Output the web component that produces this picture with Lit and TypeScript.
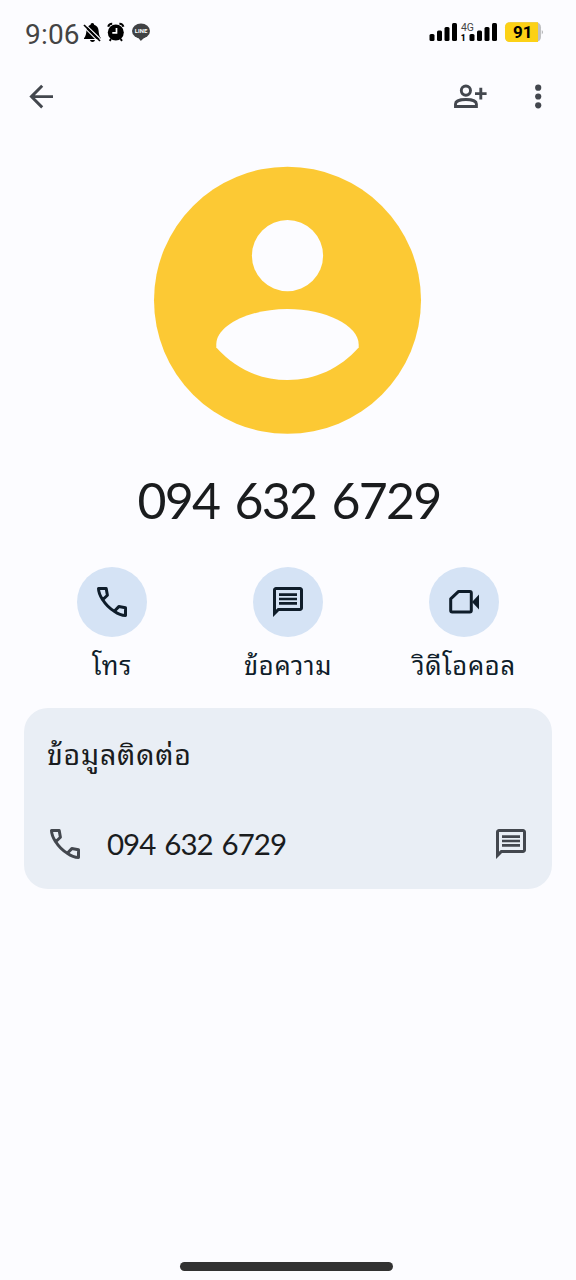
import { LitElement, html, svg, css } from "lit";
import { customElement, property } from "lit/decorators.js";

const phone = svg`<g transform="translate(3 3)" fill="none" stroke="currentColor" stroke-width="3" stroke-linejoin="round">
  <path d="M1.5 1.5H9.2L10.4 8.2L5.7 12.8C3.1 9 1.6 5.2 1.5 1.5ZM5.7 12.8C8.7 17.6 12.5 21.4 17.3 24.3M28.5 28.5V20.8L21.8 19.6L17.3 24.3C21 26.9 24.8 28.4 28.5 28.5Z"/></g>`;
const chat = svg`<path transform="scale(1.5)" fill="currentColor" d="M20 2H4c-1.1 0-2 .9-2 2v18l4-4h14c1.1 0 2-.9 2-2V4c0-1.1-.9-2-2-2zm0 14H5.17L4 17.17V4h16v12zM6 12h12v1.8H6zM6 9.1h12v1.8H6zM6 6.2h12V8H6z"/>`;
const video = svg`<path fill="none" stroke="currentColor" stroke-width="3" stroke-linejoin="round" d="M12.6 7.4H23.800Q25.3 7.4 25.3 8.900V26.500Q25.3 28 23.800 28H6.200Q4.7 28 4.700 26.500V14.900Z"/>
  <path fill="currentColor" d="M26 18L33 10.5V25.5Z"/>`;
const icons: Record<string, unknown> = { phone, chat, video };

@customElement("line-icon")
class LineIcon extends LitElement {
  @property() name = "phone";
  static styles = css`
    :host { display: block; width: 36px; height: 36px; }
    svg { display: block; }
  `;
  render() {
    return html`<svg width="36" height="36" viewBox="0 0 36 36">${icons[this.name]}</svg>`;
  }
}

@customElement("quick-action")
class QuickAction extends LitElement {
  @property() icon = "phone";
  @property() label = "";
  static styles = css`
    :host { display: flex; flex-direction: column; align-items: center; color: #0f1d2a; }
    .disc { width: 70px; height: 70px; border-radius: 50%; background: #d5e3f5; display: grid; place-items: center; }
    .label { margin-top: 10px; font-size: 25.5px; line-height: 36px; letter-spacing: .7px; font-weight: 400; white-space: nowrap; }
  `;
  render() {
    return html`<div class="disc"><line-icon name=${this.icon}></line-icon></div>
      <div class="label">${this.label}</div>`;
  }
}

@customElement("status-bar")
class StatusBar extends LitElement {
  static styles = css`
    :host { display: flex; height: 64px; box-sizing: border-box; padding: 16px 32px 0 25px; font-family: Roboto, sans-serif; }
    .time { width: 57px; height: 36px; line-height: 38px; font-size: 28px; color: #444; letter-spacing: .2px; }
    svg { display: block; }
    .right { margin-left: auto; }
  `;
  render() {
    return html`
      <div class="time">9:06</div>
      <svg width="72" height="32" viewBox="82 16 72 32">
        <path d="M92.3 23c1.2 0 1.8.8 1.8 1.8 3 .9 4.3 3 4.5 6 .2 3.5.8 5.5 2.4 7.500v.7H84v-.7c1.600-2 2.200-4 2.400-7.500.2-3 1.500-5.100 4.200-6 0-1 .6-1.800 1.700-1.800zM90 40h5c-.3 1.200-1.200 1.900-2.500 1.900S90.300 41.200 90 40z"/>
        <path d="M85 23.800L101 39.500" stroke="#fcfcff" stroke-width="1.100"/>
        <path d="M84 25L100 41" stroke="#000" stroke-width="1.700"/>
        <path d="M83 26.300L99 42.300" stroke="#fcfcff" stroke-width="1.100"/>
        <circle cx="115.800" cy="32.500" r="8"/>
        <path d="M108.200 26.800Q109 23.700 112.200 23.800M119.400 23.800Q122.700 23.700 123.400 26.800M111 39L109.700 40.800M120.600 39L122 40.800" fill="none" stroke="#000" stroke-width="2"/>
        <path d="M116.500 28V32.800H112.300" fill="none" stroke="#fff" stroke-width="1.700"/>
        <ellipse cx="141" cy="31" rx="9" ry="7.600" fill="#404244"/>
        <path d="M137 36H146L140.800 41Z" fill="#404244"/>
        <text x="134.800" y="33.300" font-size="6" font-weight="700" fill="#fff" textLength="12.400" lengthAdjust="spacingAndGlyphs">LINE</text>
      </svg>
      <svg class="right" width="116" height="32" viewBox="428 16 116 32">
        <rect x="429.500" y="34" width="5" height="7" rx="1.500"/>
        <rect x="437" y="30.500" width="5" height="10.500" rx="1.500"/>
        <rect x="444.500" y="27" width="5" height="14" rx="1.500"/>
        <rect x="452" y="23" width="5" height="18" rx="1.500"/>
        <text x="461" y="31" font-size="10.500" fill="#444" textLength="13" lengthAdjust="spacingAndGlyphs">4G</text>
        <text x="460.800" y="41" font-size="8.500" font-weight="900">1</text>
        <rect x="469.500" y="34" width="5" height="7" rx="1.500"/>
        <rect x="477" y="30.500" width="5" height="10.500" rx="1.500"/>
        <rect x="484.500" y="27" width="5" height="14" rx="1.500"/>
        <rect x="492" y="23" width="5" height="18" rx="1.500"/>
        <rect x="505" y="22.300" width="36" height="19.700" rx="5" fill="#bfc0c2"/>
        <path d="M510 22.300H538V42H510Q505 42 505 37V27.300Q505 22.300 510 22.300Z" fill="#fcd116"/>
        <path d="M541.800 30Q544 32 541.800 34.500Z" fill="#a8a9ab"/>
        <text x="513" y="38" font-size="16.500" font-weight="700" textLength="19.500" lengthAdjust="spacingAndGlyphs">91</text>
      </svg>`;
  }
}

@customElement("app-root")
class AppRoot extends LitElement {
  static styles = css`
    :host {
      display: flex; flex-direction: column; height: 1280px; box-sizing: border-box;
      background: #fcfcff; color: #1a1c1e;
      font-family: Lato, "Noto Sans Thai Looped", "Noto Looped Thai", Loma, Garuda, Waree, Norasi, "Noto Serif Thai", sans-serif;
    }
    svg { display: block; }
    .toolbar { height: 64px; padding: 1px 31px 0 28px; box-sizing: border-box; display: flex; align-items: center; justify-content: space-between; color: #43474e; }
    .tools { display: flex; align-items: center; gap: 42px; }
    .avatar { margin: 38px 0 0 153px; }
    .number { margin-top: 33px; height: 64px; line-height: 64px; font-size: 50px; text-align: center; letter-spacing: -1.8px; word-spacing: 4.4px; padding-left: 2px; white-space: nowrap; }
    .actions { margin-top: 35px; padding: 0 24px; display: grid; grid-template-columns: repeat(3, 176px); height: 141px; }
    .card { margin: 0 24px; height: 181px; box-sizing: border-box; border-radius: 24px; background: #e9eef5; padding: 28px 23px 0; }
    .title { font-size: 28.5px; line-height: 36px; letter-spacing: .8px; white-space: nowrap; }
    .row { margin-top: 54px; display: flex; align-items: center; height: 36px; color: #43474e; }
    .value { margin-left: 24px; flex: 1; font-size: 29.5px; line-height: 36px; color: #1a1c1e; letter-spacing: -1px; word-spacing: 2.4px; }
    .handle { margin: auto auto 9px 180px; width: 213px; height: 9px; border-radius: 5px; background: #323232; }
  `;
  render() {
    return html`
      <status-bar></status-bar>
      <div class="toolbar">
        <svg width="28" height="28" viewBox="28 83 28 28" fill="none" stroke="currentColor" stroke-width="2.900">
          <path d="M53 96.600H31.500M42.200 85.800L31.400 96.600L42.200 107.400"/>
        </svg>
        <div class="tools">
          <svg width="36" height="28" viewBox="453 83 36 28" fill="none" stroke="currentColor" stroke-width="2.900">
            <circle cx="465.900" cy="90.600" r="4.600"/>
            <path d="M455.500 106.500V104C455.500 101 460.500 99.500 465.900 99.500S476.400 101 476.400 104V106.500Z"/>
            <path d="M475 93.600H486.600M480.800 87.800V99.400"/>
          </svg>
          <svg width="14" height="28" viewBox="531 83 14 28" fill="currentColor">
            <circle cx="538.200" cy="87.700" r="3.100"/><circle cx="538.200" cy="96.500" r="3.100"/><circle cx="538.200" cy="105.300" r="3.100"/>
          </svg>
        </div>
      </div>
      <svg class="avatar" width="269" height="269" viewBox="153 166 269 269">
        <circle cx="287.500" cy="300.300" r="133.500" fill="#fcc934"/>
        <circle cx="287.500" cy="255.700" r="35.600" fill="#fcfcff"/>
        <path fill="#fcfcff" d="M216.300 347.500V344.500C216.300 325 250 309 287.500 309S358.700 325 358.700 344.500V347.500C340 368.500 315 380 287.500 380S235 368.500 216.300 347.500Z"/>
      </svg>
      <div class="number">094 632 6729</div>
      <div class="actions">
        <quick-action icon="phone" label="โทร"></quick-action>
        <quick-action icon="chat" label="ข้อความ"></quick-action>
        <quick-action icon="video" label="วิดีโอคอล"></quick-action>
      </div>
      <div class="card">
        <div class="title">ข้อมูลติดต่อ</div>
        <div class="row">
          <line-icon name="phone"></line-icon>
          <div class="value">094 632 6729</div>
          <line-icon name="chat"></line-icon>
        </div>
      </div>
      <div class="handle"></div>`;
  }
}
